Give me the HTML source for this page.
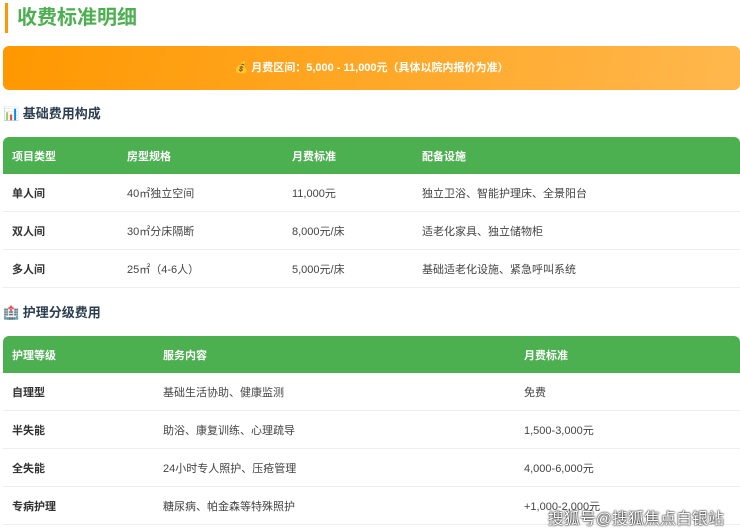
<!DOCTYPE html><html><head><meta charset="utf-8"><style>
body{margin:0;width:740px;height:532px;overflow:hidden;background:#fff;font-family:"Liberation Sans","Noto Sans CJK SC",sans-serif;color:#333;position:relative}
.t{position:absolute;left:5px;top:3px;height:30px;border-left:3px solid #ff9800;padding-left:9px;font-size:20px;font-weight:bold;color:#4caf50;line-height:30px}
.b{position:absolute;left:3px;top:46px;width:737px;height:44px;border-radius:6px;background:linear-gradient(100deg,#ff9800,#ffb74d);color:#fff;font-size:11px;font-weight:bold;text-align:center;line-height:44px}
.h{position:absolute;left:3px;font-size:13px;font-weight:bold;color:#2c3e50}
table{position:absolute;left:3px;width:737px;border-collapse:collapse;font-size:11px}
th{background:#4caf50;color:#fff;text-align:left;height:37px;padding:0 0 0 9px;font-weight:bold}
tr:first-child th:first-child{border-top-left-radius:6px}
tr:first-child th:last-child{border-top-right-radius:6px}
td{height:37px;padding:0 0 0 9px;border-bottom:1px solid #eee;color:#444}
td:first-child{font-weight:bold;color:#333}
.w{position:absolute;right:16px;top:505px;color:#fff;font-size:16px;text-shadow:0 0 2px #000,0 0 1px #000}
</style></head><body>
<div class="t">收费标准明细</div>
<div class="b">💰 月费区间：5,000 - 11,000元（具体以院内报价为准）</div>
<div class="h" style="top:103px">📊 基础费用构成</div>
<table style="top:137px"><tr><th style="width:106px">项目类型</th><th style="width:156px">房型规格</th><th style="width:121px">月费标准</th><th>配备设施</th></tr>
<tr><td>单人间</td><td>40㎡独立空间</td><td>11,000元</td><td>独立卫浴、智能护理床、全景阳台</td></tr>
<tr><td>双人间</td><td>30㎡分床隔断</td><td>8,000元/床</td><td>适老化家具、独立储物柜</td></tr>
<tr><td>多人间</td><td>25㎡（4-6人）</td><td>5,000元/床</td><td>基础适老化设施、紧急呼叫系统</td></tr></table>
<div class="h" style="top:302px">🏥 护理分级费用</div>
<table style="top:336px"><tr><th style="width:142px">护理等级</th><th style="width:352px">服务内容</th><th>月费标准</th></tr>
<tr><td>自理型</td><td>基础生活协助、健康监测</td><td>免费</td></tr>
<tr><td>半失能</td><td>助浴、康复训练、心理疏导</td><td>1,500-3,000元</td></tr>
<tr><td>全失能</td><td>24小时专人照护、压疮管理</td><td>4,000-6,000元</td></tr>
<tr><td>专病护理</td><td>糖尿病、帕金森等特殊照护</td><td>+1,000-2,000元</td></tr></table>
<div class="w">搜狐号@搜狐焦点白银站</div>
</body></html>
